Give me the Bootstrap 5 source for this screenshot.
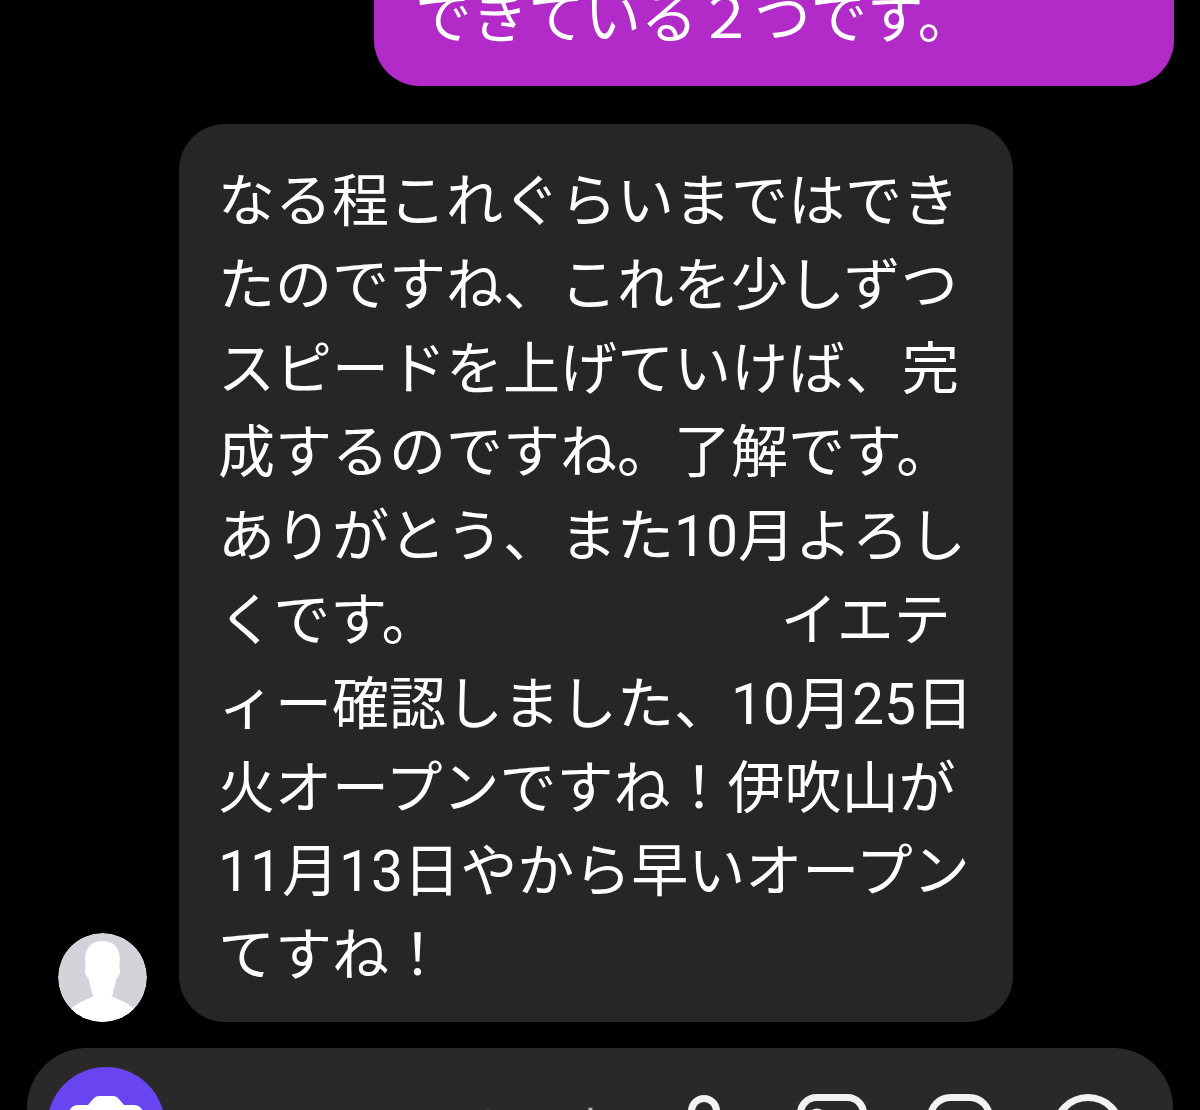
<!DOCTYPE html>
<html lang="ja">
<head>
  <meta charset="UTF-8">
  <title>Chat</title>
  <link href="https://cdn.jsdelivr.net/npm/bootstrap@5.3.3/dist/css/bootstrap.min.css" rel="stylesheet">
  <style>
html, body { height: 1110px; overflow: hidden; background: #000; }
body { font-family: Roboto, "Noto Sans CJK JP", sans-serif; color: #fff; }
.chat-screen { width: 1200px; height: 1110px; overflow: hidden; }
.sent-wrap { height: 86px; padding-right: 26px; }
.sent-bubble { width: 800px; height: 86px; padding: 0 41px; background: #b22ac8; border-radius: 0 0 46px 46px; font-size: 56.5px; line-height: 38px; white-space: nowrap; }
.recv-wrap { margin-top: 38px; height: 898px; padding-left: 58px; }
.avatar-pic { width: 89px; height: 89px; border-radius: 50%; flex: none; margin-right: 32px; }
.recv-bubble { width: 834px; height: 898px; padding: 36px 30px 0 39px; background: #262626; border-radius: 46px; font-size: 57px; line-height: 83.8px; white-space: nowrap; }
.recv-line { display: block; height: 83.8px; }
.gap-fix { margin-left: -7px; }
.input-bar { margin: 26px 27px 0 27px; height: 120px; background: #292929; border-radius: 60px; padding: 19px 49px 0 20px; }
.cam-btn { width: 118px; height: 118px; border-radius: 50%; background: #6845f0; flex: none; }
.hint-text { margin-left: 54px; padding-top: 24px; font-size: 50px; line-height: 84px; color: #b5b5b5; white-space: nowrap; }
.bar-icons { margin-left: auto; margin-top: 27px; }
.bar-icons svg { fill: none; stroke: #f2f2f2; stroke-width: 7; }
.clip-icon { width: 32px; height: 70px; margin-right: 77px; }
.pic-icon { width: 70px; height: 70px; margin-right: 60px; }
.sticker-icon { width: 66px; height: 70px; margin-right: 59px; }
.voice-icon { width: 72px; height: 72px; }
  </style>
</head>
<body>
  <div class="chat-screen">
    <div class="sent-wrap d-flex justify-content-end">
      <div class="sent-bubble">できている２つです。</div>
    </div>
    <div class="recv-wrap d-flex align-items-end">
      <svg class="avatar-pic" viewBox="0 0 90 90">
        <circle cx="45" cy="45" r="45" fill="#d3d4d9"/>
        <path d="M45 8c-11 0-17.500 7-17.500 18 0 4 .5 8 .5 10-1.500 1-1 7 3 10 1 5 2 9 3 12 0 3 1 5 2 6-5 3-17 6-23 13a45 45 0 0 0 64 0c-6-7-18-10-23-13 1-1 2-3 2-6 1-3 2-7 3-12 4-3 4.500-9 3-10 0-2 .5-6 .5-10 0-11-6.500-18-17.500-18z" fill="#fff"/>
      </svg>
      <div class="recv-bubble">
        <span class="recv-line">なる程これぐらいまではでき</span>
        <span class="recv-line">たのですね、これを少しずつ</span>
        <span class="recv-line">スピードを上げていけば、完</span>
        <span class="recv-line">成するのですね。了解です。</span>
        <span class="recv-line">ありがとう、また10月よろし</span>
        <span class="recv-line">くです。&emsp;&emsp;&emsp;&emsp;&emsp;&emsp;<span class="gap-fix">イエテ</span></span>
        <span class="recv-line">ィー確認しました、10月25日</span>
        <span class="recv-line">火オープンですね！伊吹山が</span>
        <span class="recv-line">11月13日やから早いオープン</span>
        <span class="recv-line">てすね！</span>
      </div>
    </div>
    <div class="input-bar d-flex">
      <div class="cam-btn">
        <svg width="118" height="118" viewBox="0 0 118 118">
          <path d="M22 48q0-10 10-10h9l6-7q2-2 5-2h14q3 0 5 2l6 7h9q10 0 10 10v34q0 10-10 10H32q-10 0-10-10z" fill="#fff"/>
        </svg>
      </div>
      <div class="hint-text">メッセージを入力</div>
      <div class="bar-icons d-flex align-items-start">
        <svg class="clip-icon" viewBox="0 0 32 70"><path d="M3.500 70V17a12.500 12.500 0 0 1 25 0v53"/></svg>
        <svg class="pic-icon" viewBox="0 0 70 70"><rect x="3.500" y="3.500" width="63" height="63" rx="16"/><circle cx="20" cy="24" r="6"/></svg>
        <svg class="sticker-icon" viewBox="0 0 66 70"><rect x="3.500" y="3.500" width="59" height="63" rx="20"/></svg>
        <svg class="voice-icon" viewBox="0 0 72 72"><circle cx="36" cy="36" r="32.500"/></svg>
      </div>
    </div>
  </div>
</body>
</html>
